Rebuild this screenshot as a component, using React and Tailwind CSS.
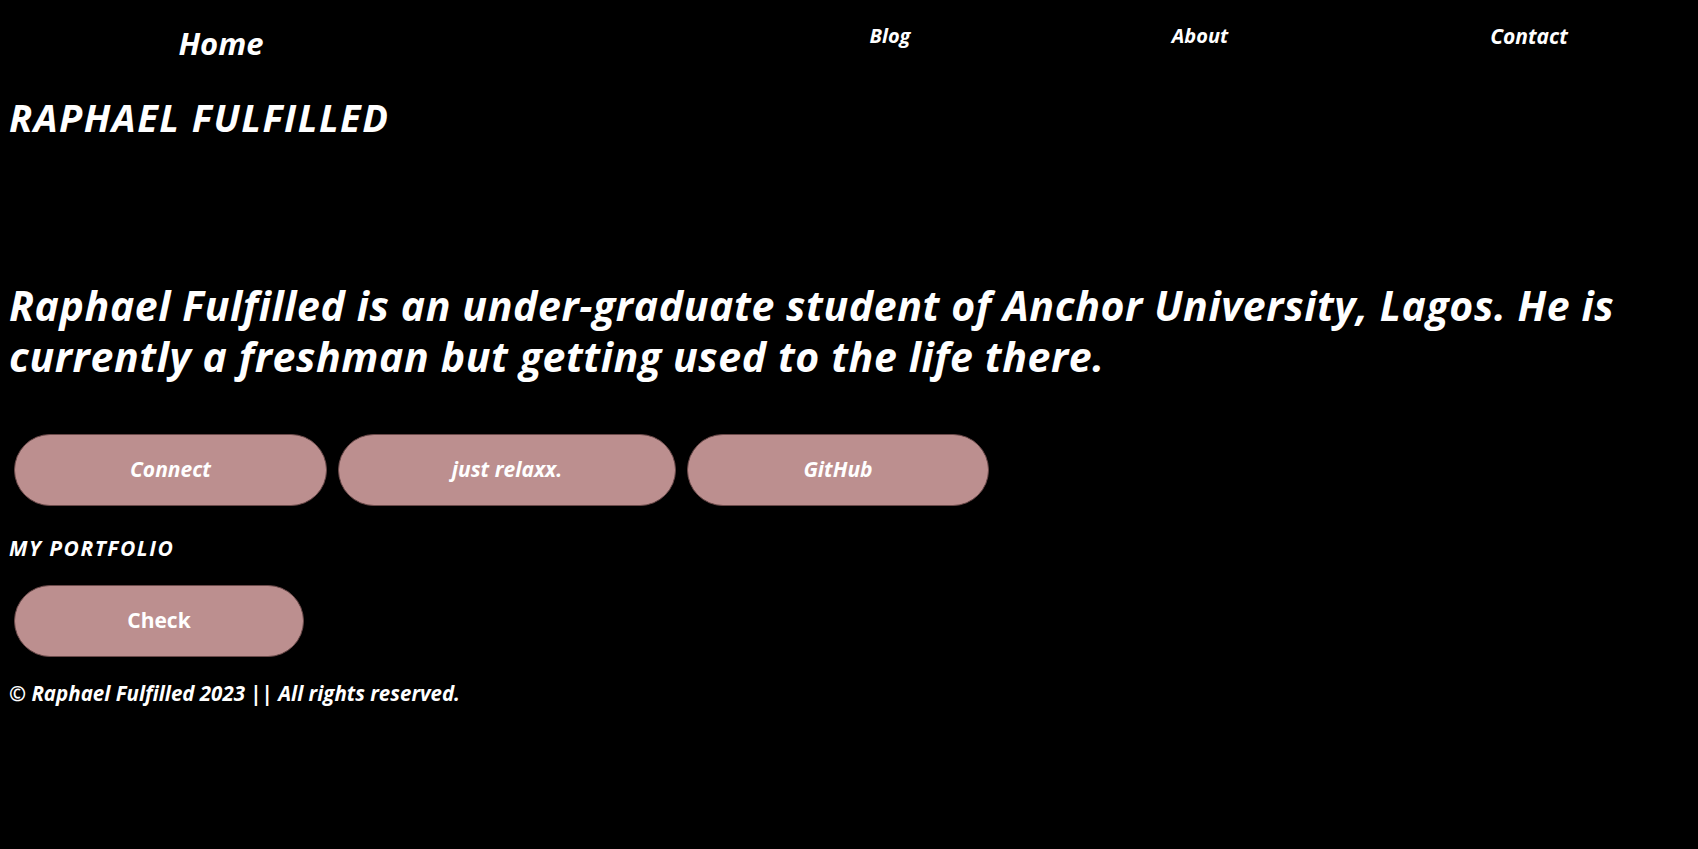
const sans = { fontFamily: "'Open Sans', Lato, sans-serif" };

function NavLink({ children, className }) {
  return (
    <a href="#" className={`text-center font-bold italic text-white ${className}`} style={sans}>
      {children}
    </a>
  );
}

function PillButton({ children, className = "" }) {
  return (
    <button
      type="button"
      className={`flex h-[72px] items-center justify-center rounded-full border border-[#6b4a4a] bg-[#bc8f8f] text-[21px] font-bold text-white ${className}`}
      style={sans}
    >
      {children}
    </button>
  );
}

export default function App() {
  return (
    <div className="min-h-screen bg-black text-white">
      <nav className="flex h-[80px] items-start">
        <NavLink className="mt-[25px] w-[442px] text-[31px] leading-[36px]">Home</NavLink>
        <NavLink className="ml-[348px] mt-[22px] w-[200px] text-[20px] leading-[28px]">Blog</NavLink>
        <NavLink className="ml-[110px] mt-[22px] w-[200px] text-[20px] leading-[28px]">About</NavLink>
        <NavLink className="ml-[129px] mt-[22px] w-[200px] text-[21px] leading-[28px]">Contact</NavLink>
      </nav>

      <main className="px-[9px]">
        <h1 className="mt-[15px] text-[38px] font-bold italic leading-[44px] tracking-[1.5px]" style={sans}>
          RAPHAEL FULFILLED
        </h1>

        <p className="mt-[141px] max-w-[1640px] text-[41px] font-bold italic leading-[51px] tracking-[0.6px]" style={sans}>
          Raphael Fulfilled is an under-graduate student of Anchor University, Lagos. He is
          currently a freshman but getting used to the life there.
        </p>

        <div className="mt-[52px] flex gap-[11px] px-[5px]">
          <PillButton className="w-[313px] italic">Connect</PillButton>
          <PillButton className="w-[338px] italic">just relaxx.</PillButton>
          <PillButton className="w-[302px] italic">GitHub</PillButton>
        </div>

        <h2 className="mt-[30px] text-[21px] font-bold italic leading-[24px] tracking-[1.5px]" style={sans}>
          MY PORTFOLIO
        </h2>

        <div className="mt-[25px] px-[5px]">
          <PillButton className="w-[290px]">Check</PillButton>
        </div>

        <footer className="mt-[24px] text-[20.5px] font-bold italic leading-[24px]" style={sans}>
          © Raphael Fulfilled 2023 || All rights reserved.
        </footer>
      </main>
    </div>
  );
}
